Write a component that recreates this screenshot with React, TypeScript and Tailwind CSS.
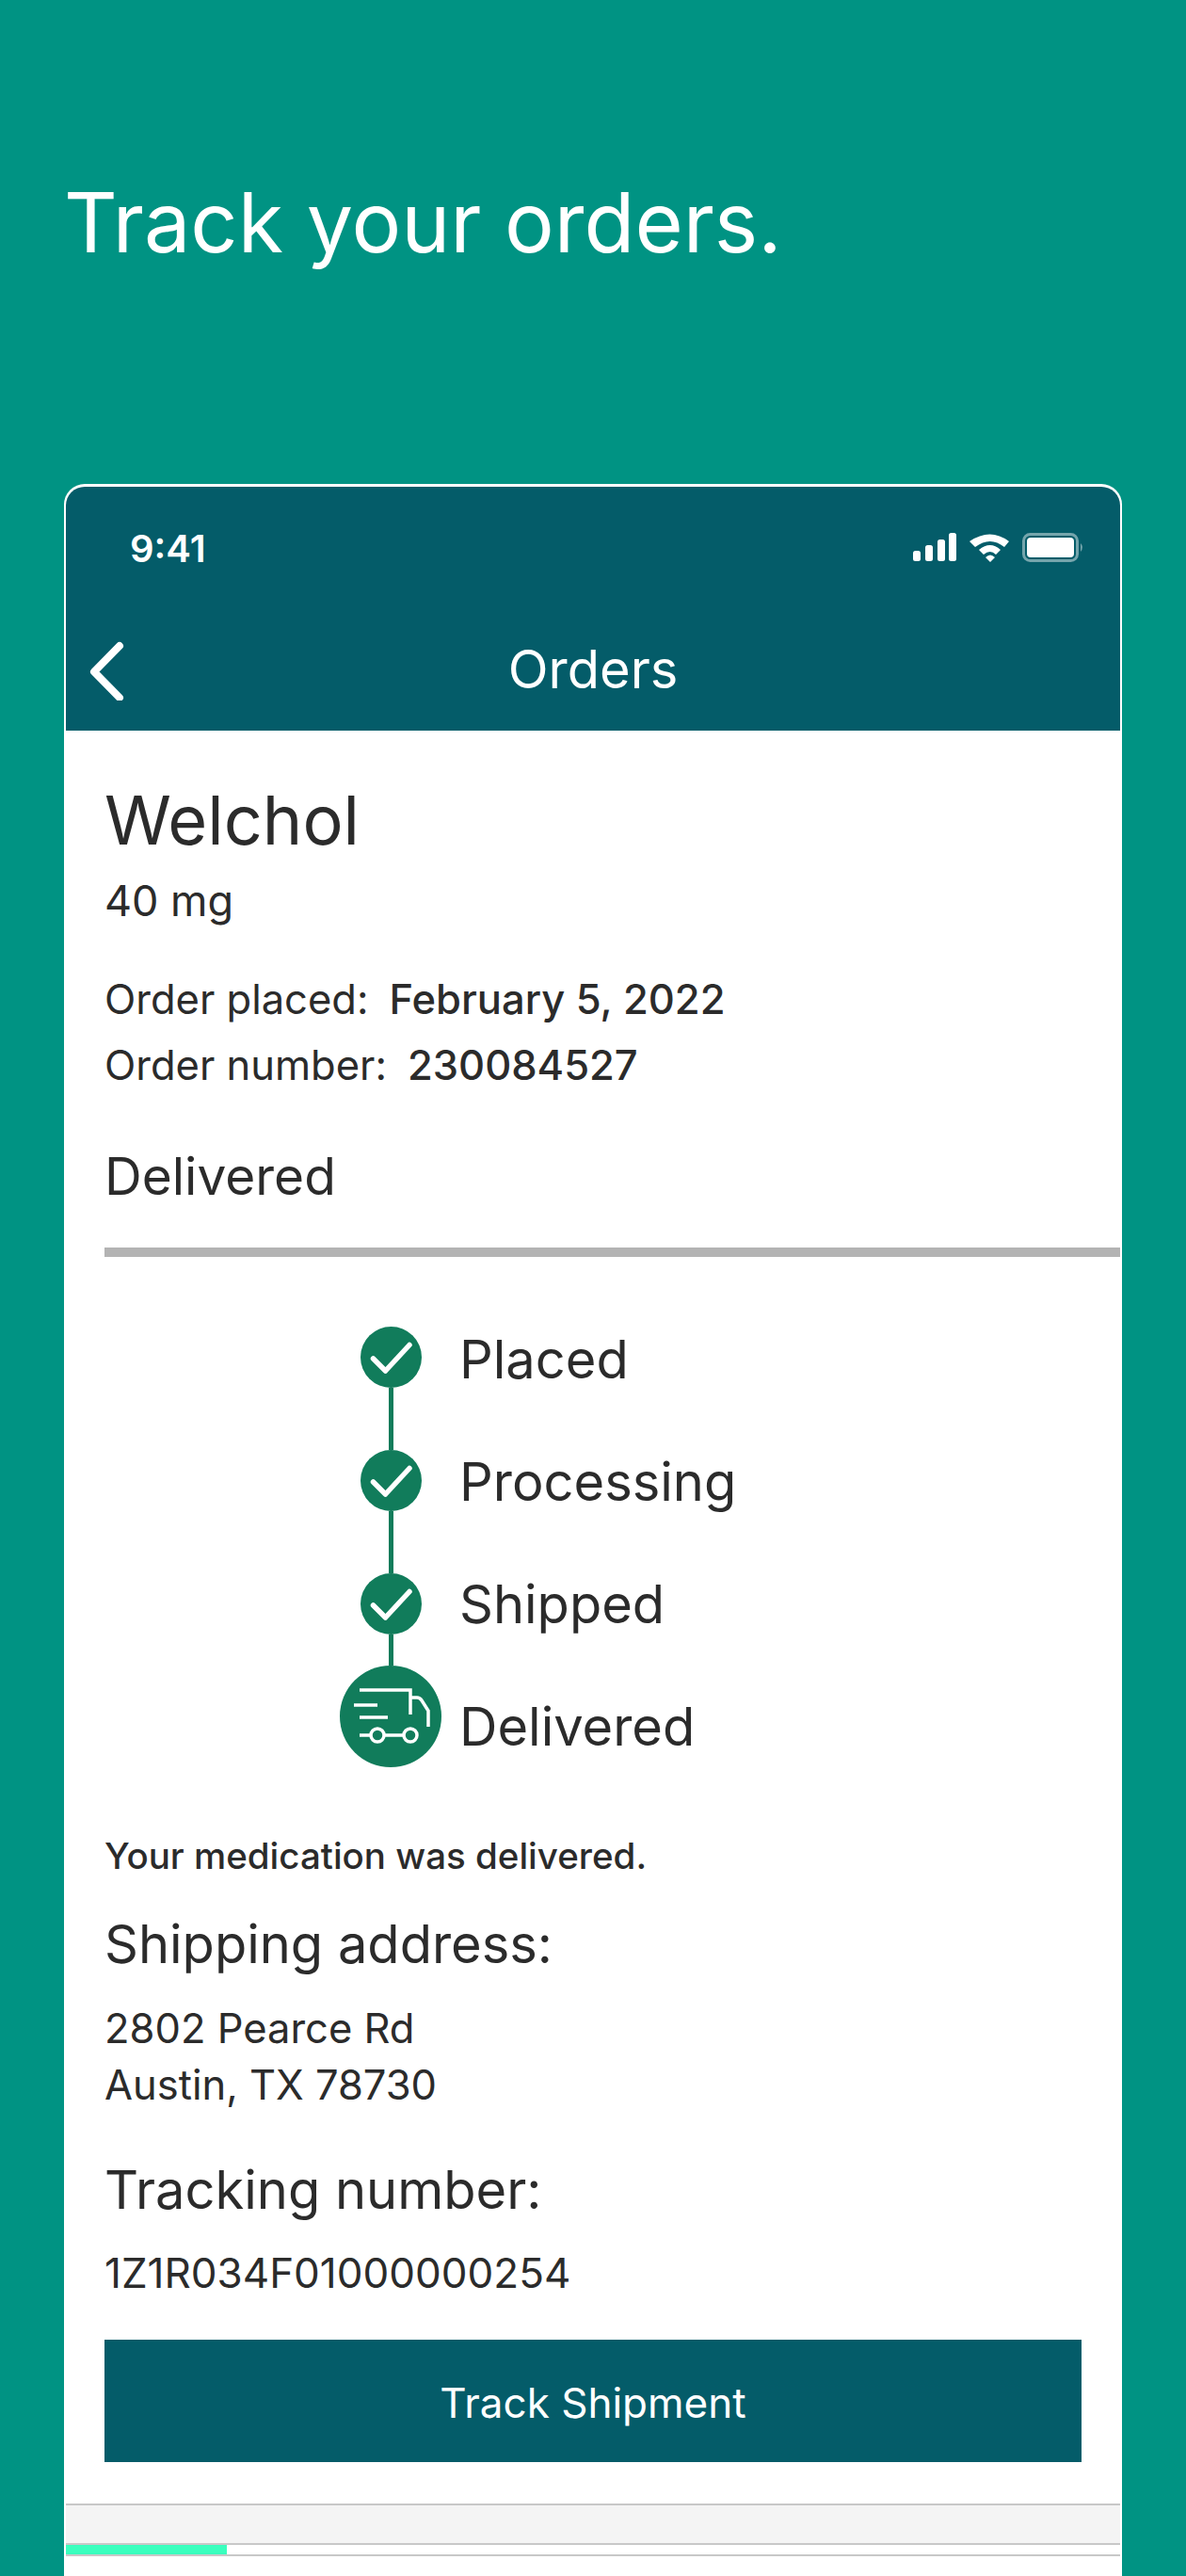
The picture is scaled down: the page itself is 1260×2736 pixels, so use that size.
const checkCircle = (
  <svg viewBox="0 0 65 65" className="w-[65px] h-[65px] shrink-0">
    <circle cx="32.5" cy="32.5" r="32.5" fill="#117c5b" />
    <path d="M13.5 34 L26.5 47 L52 19.5" fill="none" stroke="#fff" strokeWidth="5.5" strokeLinecap="round" strokeLinejoin="round" />
  </svg>
);

function TruckCircle() {
  return (
    <svg viewBox="0 0 108 108" className="w-[108px] h-[108px] shrink-0">
      <circle cx="54" cy="54" r="54" fill="#117c5b" />
      <g fill="none" stroke="#fff" strokeWidth="3.5">
        <path d="M21 26 H75 V52" />
        <path d="M75 34 H82 Q85 34 87 37 L94 48 V65" />
        <path d="M15 42 H40" />
        <path d="M21 55 H51" />
        <path d="M21 74 H33 M48 74 H67" />
        <circle cx="40" cy="74" r="7" />
        <circle cx="75" cy="74" r="7" />
      </g>
    </svg>
  );
}

function StatusIcons() {
  return (
    <svg viewBox="0 0 182 32" className="w-[182px] h-[32px]">
      <g fill="#fff">
        <rect x="0" y="19" width="8" height="11" rx="2.5" />
        <rect x="13" y="13" width="8" height="17" rx="2.5" />
        <rect x="26" y="7" width="8" height="23" rx="2.5" />
        <rect x="38" y="0" width="8" height="30" rx="2.5" />
        <path d="M60 9 Q82 -6 102 9 L97 15 Q82 3 66 15 Z" />
        <path d="M70 18 Q82 8 93 18 L88 23 Q82 17 75 23 Z" />
        <path d="M77 26 Q82 21 87 26 L82 31 Z" />
        <rect x="121" y="5" width="50" height="21" rx="4" />
        <path d="M178 11 Q182 15 178 20 Z" fillOpacity="0.45" />
      </g>
      <rect x="117.5" y="1.5" width="57" height="28" rx="7" fill="none" stroke="#fff" strokeOpacity="0.45" strokeWidth="3" />
    </svg>
  );
}

export default function App() {
  const steps = ["Placed", "Processing", "Shipped", "Delivered"];
  return (
    <div className="w-[1260px] h-[2736px] overflow-hidden bg-[#009383] font-['Inter',sans-serif] text-[#2b2b2b]">
      <h1 className="h-[514px] pl-[68px] pt-[181px] text-[88px] leading-[110px] font-normal text-white">
        Track your orders.
      </h1>

      <div className="ml-[68px] w-[1124px] h-[2222px] bg-white border-x-2 border-t-[3px] border-white rounded-t-[22px] flex flex-col">
        <div className="h-[259px] bg-[#045c69] rounded-t-[20px] text-white shrink-0 flex flex-col">
          <div className="h-[125px] pl-[68px] pr-[38px] pt-[43px] flex justify-between">
            <span className="text-[40px] leading-[46px] font-semibold">9:41</span>
            <div className="pt-[6px]">
              <StatusIcons />
            </div>
          </div>
          <div className="relative h-[134px] flex items-start justify-center pt-[36px]">
            <svg viewBox="0 0 40 64" className="absolute left-[23px] top-[38px] w-[40px] h-[64px]">
              <path d="M34 6 L7 33.5 L34 61" fill="none" stroke="#fff" strokeWidth="8" strokeLinecap="round" strokeLinejoin="round" />
            </svg>
            <span className="text-[56px] leading-[66px]">Orders</span>
          </div>
        </div>

        <div className="flex-1 pl-[41px]">
          <div className="text-[72px] leading-[90px] pt-[50px]">Welchol</div>
          <div className="text-[45px] leading-[52px] mt-[15px]">40 mg</div>
          <div className="text-[43.5px] leading-[70px] mt-[43px]">
            <div>
              Order placed:<span className="font-medium ml-[22px]">February 5, 2022</span>
            </div>
            <div>
              Order number:<span className="font-medium ml-[22px]">230084527</span>
            </div>
          </div>
          <div className="text-[55px] leading-[68px] mt-[49px]">Delivered</div>
          <div className="h-[10px] bg-[#b3b3b3] mt-[42px]" />

          <div className="flex mt-[74px] ml-[250px]">
            <div className="w-[108px] flex flex-col items-center">
              {checkCircle}
              <div className="w-[5px] h-[66px] bg-[#117c5b]" />
              {checkCircle}
              <div className="w-[5px] h-[66px] bg-[#117c5b]" />
              {checkCircle}
              <div className="w-[5px] h-[33px] bg-[#117c5b]" />
              <TruckCircle />
            </div>
            <div className="ml-[19px] -mt-[30px] -mb-[2px] flex flex-col">
              {steps.map((s) => (
                <div key={s} className="h-[130px] flex items-center text-[56px]">
                  {s}
                </div>
              ))}
            </div>
          </div>

          <div className="text-[38.5px] leading-[50px] font-medium mt-[49px]">Your medication was delivered.</div>
          <div className="text-[56px] leading-[68px] mt-[35px]">Shipping address:</div>
          <div className="text-[43.5px] leading-[60px] mt-[25px]">
            <div>2802 Pearce Rd</div>
            <div>Austin, TX 78730</div>
          </div>
          <div className="text-[56px] leading-[68px] mt-[48px]">Tracking number:</div>
          <div className="text-[44px] leading-[60px] mt-[24px]">1Z1R034F01000000254</div>
          <div className="w-[1038px] h-[130px] bg-[#045c69] text-white flex items-center justify-center text-[44px] pt-[4px] mt-[41px]">
            Track Shipment
          </div>
        </div>

        <div className="h-[56px] shrink-0 mb-[21px] flex flex-col">
          <div className="h-[44px] bg-[#f4f4f4] border-y-2 border-[#c8c8c8]" />
          <div className="h-[12px] border-b-2 border-[#c8c8c8]">
            <div className="w-[171px] h-full bg-[#3affbe]" />
          </div>
        </div>
      </div>
    </div>
  );
}
